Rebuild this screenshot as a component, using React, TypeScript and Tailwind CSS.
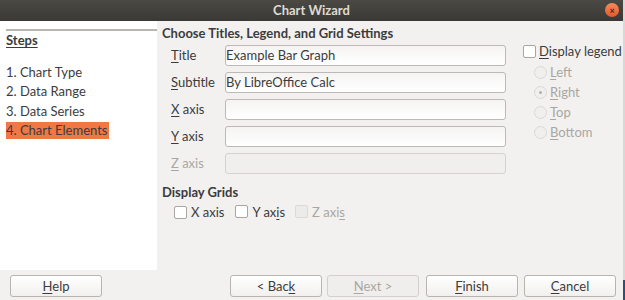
import React from "react";

const U = ({ children }: { children: React.ReactNode }) => (
  <span className="underline underline-offset-2">{children}</span>
);

function TextRow({
  label,
  value,
  disabled,
}: {
  label: React.ReactNode;
  value?: string;
  disabled?: boolean;
}) {
  return (
    <div className="flex items-center h-[21px]">
      <div className={`w-[63px] pl-[9px] ${disabled ? "text-[#aaa7a1]" : ""}`}>{label}</div>
      <div
        className={`w-[281px] h-[21px] rounded-[3px] border flex items-center ${
          disabled
            ? "border-[#d6d3cf] bg-[#f0efed]"
            : "border-[#bdb9b4] bg-gradient-to-b from-[#f5f4f3] to-white"
        }`}
      >
        {value}
      </div>
    </div>
  );
}

function Radio({ checked, children }: { checked?: boolean; children: React.ReactNode }) {
  return (
    <div className="flex items-center h-[20px] pl-[11px] gap-[3px] text-[#aaa7a1]">
      <span className="w-[13px] h-[13px] rounded-full border border-[#dcd9d5] bg-[#f0efed] flex items-center justify-center">
        {checked && <span className="w-[3px] h-[3px] rounded-full bg-[#b3b0ab]" />}
      </span>
      <span>{children}</span>
    </div>
  );
}

function Check({ disabled }: { disabled?: boolean }) {
  return (
    <span
      className={`inline-block w-[13px] h-[13px] rounded-[2px] border ${
        disabled ? "border-[#dcd9d5] bg-[#ecebe9]" : "border-[#a9a5a0] bg-white"
      }`}
    />
  );
}

function Btn({ children, disabled }: { children: React.ReactNode; disabled?: boolean }) {
  return (
    <div
      className={`w-[92px] h-[22px] rounded-[3px] border flex items-center justify-center ${
        disabled
          ? "border-[#d3d0cc] bg-[#efeeec] text-[#aaa7a1]"
          : "border-[#b8b4ae] bg-gradient-to-b from-white to-[#f1f0ee]"
      }`}
    >
      {children}
    </div>
  );
}

export default function App() {
  return (
    <div className="w-[625px] h-[300px] flex font-['Lato',sans-serif] text-[13px] text-[#3c3c3c] leading-none overflow-hidden">
      <div className="w-[623px] flex flex-col bg-[#f2f1f0]">
        {/* Title bar */}
        <div className="h-[21px] shrink-0 bg-gradient-to-b from-[#4a4944] to-[#3a3935] flex items-center justify-center relative">
          <span className="font-bold text-[13px] text-[#dfdbd2]">Chart Wizard</span>
          <span className="absolute right-[4px] top-[3px] w-[14px] h-[14px] rounded-full bg-gradient-to-b from-[#f58a5c] to-[#e4582a] flex items-center justify-center text-[9px] text-[#3a2a22] font-bold">
            ×
          </span>
        </div>

        <div className="flex flex-1">
          {/* Steps panel */}
          <div className="w-[157px] h-[249px] bg-white pt-[8px]">
            <div className="ml-[6px] h-[2px] bg-[#b9b6b1]" />
            <div className="pl-[6px] pt-[3px] h-[16px] flex items-end font-bold">
              <U>Steps</U>
            </div>
            <div className="pl-[6px] pt-[15px] flex flex-col">
              <div className="h-[20px] flex items-center">1. Chart Type</div>
              <div className="h-[19px] flex items-center">2. Data Range</div>
              <div className="h-[20px] flex items-center">3. Data Series</div>
              <div className="h-[19px] flex items-center">
                <span className="h-[17px] flex items-center bg-[#f07746] pr-[2px]">4. Chart Elements</span>
              </div>
            </div>
          </div>

          {/* Content */}
          <div className="flex-1 pl-[5px] pt-[5px]">
            <div className="font-bold h-[14px] flex items-center">Choose Titles, Legend, and Grid Settings</div>
            <div className="flex mt-[5px]">
              <div className="flex flex-col gap-[6px]">
                <TextRow label={<><U>T</U>itle</>} value="Example Bar Graph" />
                <TextRow label={<><U>S</U>ubtitle</>} value="By LibreOffice Calc" />
                <TextRow label={<><U>X</U> axis</>} />
                <TextRow label={<><U>Y</U> axis</>} />
                <TextRow label={<><U>Z</U> axis</>} disabled />
              </div>
              <div className="ml-[17px] flex flex-col">
                <div className="flex items-center gap-[3px] h-[14px] mt-[-1px]">
                  <Check />
                  <span>
                    <U>D</U>isplay legend
                  </span>
                </div>
                <div className="mt-[4px]">
                  <Radio>
                    <U>L</U>eft
                  </Radio>
                  <Radio checked>
                    <U>R</U>ight
                  </Radio>
                  <Radio>
                    <U>T</U>op
                  </Radio>
                  <Radio>
                    <U>B</U>ottom
                  </Radio>
                </div>
              </div>
            </div>
            <div className="font-bold mt-[11px] h-[14px] flex items-center">Display Grids</div>
            <div className="flex items-center h-[14px] mt-[6px] pl-[12px]">
              <Check />
              <span className="ml-[4px]">X axis</span>
              <span className="ml-[11px]">
                <Check />
              </span>
              <span className="ml-[4px]">
                Y ax<U>i</U>s
              </span>
              <span className="ml-[10px]">
                <Check disabled />
              </span>
              <span className="ml-[4px] text-[#aaa7a1]">
                Z axi<U>s</U>
              </span>
            </div>
          </div>
        </div>

        {/* Buttons */}
        <div className="h-[30px] shrink-0 flex items-start pl-[10px] pt-[5px]">
          <Btn>
            <U>H</U>elp
          </Btn>
          <div className="ml-[128px] flex gap-[5px]">
            <Btn>
              &lt; Bac<U>k</U>
            </Btn>
            <Btn disabled>
              <U>N</U>ext &gt;
            </Btn>
            <div className="ml-[2px] flex gap-[6px]">
              <Btn>
                <U>F</U>inish
              </Btn>
              <Btn>
                <U>C</U>ancel
              </Btn>
            </div>
          </div>
        </div>
      </div>
      {/* desktop edge */}
      <div className="w-[2px] flex flex-col">
        <div className="flex-1 bg-[#d8d8d6]" />
        <div className="h-[20px] bg-[#2a4f7c]" />
      </div>
    </div>
  );
}
